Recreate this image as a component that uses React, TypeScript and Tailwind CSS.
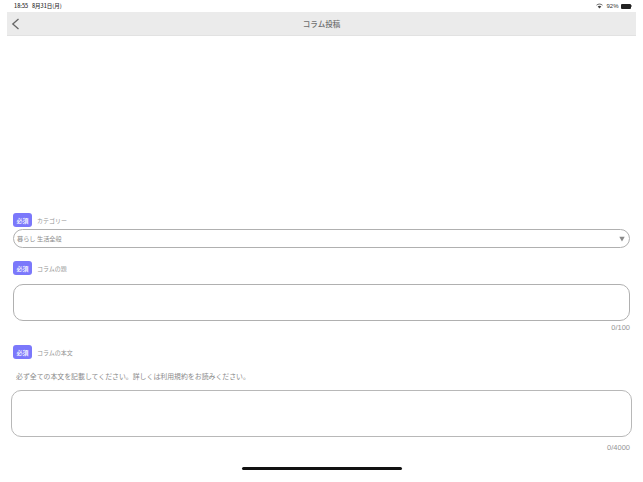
import React from 'react';

const jp = { fontFamily: '"Noto Sans CJK JP", "Liberation Sans", sans-serif' };
const latin = { fontFamily: '"Liberation Sans", sans-serif' };

function FieldLabel({ label }: { label: string }) {
  return (
    <div className="flex h-[14px] items-center pl-[13px]">
      <span className="flex h-[14px] w-[19px] items-center justify-center rounded-[3px] bg-[#7b78fb] text-[6px] font-medium text-white">
        必須
      </span>
      <span className="ml-[5px] text-[6px] text-[#949494]">{label}</span>
    </div>
  );
}

export default function App() {
  return (
    <div className="flex h-[482px] w-[643px] flex-col overflow-hidden bg-white" style={jp}>
      {/* Status bar */}
      <div className="flex h-[12px] items-center justify-between pl-[14px] pr-[11px] text-[5.5px] text-[#333333]">
        <span className="font-medium">18:55&nbsp;&nbsp;&nbsp;8月31日(月)</span>
        <div className="flex items-center gap-[2px]">
          <svg width="7" height="6" viewBox="0 0 7 6" fill="none">
            <path d="M0.5 2.2 C2.2 0.7 4.8 0.7 6.5 2.2" stroke="#444444" strokeWidth="0.8" />
            <path d="M3.5 5.4 L1.7 3.4 C2.8 2.6 4.2 2.6 5.3 3.4 Z" fill="#444444" />
          </svg>
          <span className="ml-[1px] text-[6px]" style={latin}>92%</span>
          <div className="flex items-center">
            <div className="h-[5px] w-[10px] rounded-[1px] bg-[#222222]" />
            <div className="ml-[0.5px] h-[2px] w-[1px] bg-[#999999]" />
          </div>
        </div>
      </div>

      {/* Header */}
      <div className="mx-[7px] flex h-[24px] items-center border-b border-[#e2e2e2] bg-[#ebebeb]">
        <div className="flex w-[24px] shrink-0 items-center pl-[4px]">
          <svg width="9" height="12" viewBox="0 0 9 12" fill="none">
            <path d="M7.5 1 L1.8 6 L7.5 11" stroke="#666666" strokeWidth="1.3" />
          </svg>
        </div>
        <div className="flex-1 text-center text-[7.5px] font-medium text-[#6e6e6e]">コラム投稿</div>
        <div className="w-[24px] shrink-0" />
      </div>

      {/* Form */}
      <div className="flex flex-col pt-[177px]">
        <FieldLabel label="カテゴリー" />
        <div className="mx-[13px] mt-[2px] flex h-[19px] items-center justify-between rounded-full border border-[#b0b0b0] pl-[3px] pr-[4px] text-[6.2px] text-[#8a8a8a]">
          <span>暮らし 生活全般</span>
          <svg width="6" height="6" viewBox="0 0 6 6">
            <path d="M0.3 0.8 H5.7 L3 5.4 Z" fill="#8a8a8a" />
          </svg>
        </div>

        <div className="mt-[13px]">
          <FieldLabel label="コラムの題" />
        </div>
        <div className="mx-[13px] mt-[9px] h-[37px] rounded-[10px] border border-[#b0b0b0]" />
        <div className="mr-[13px] mt-[2px] h-[10px] text-right text-[7.5px] leading-[10px] text-[#949494]" style={latin}>
          0/100
        </div>

        <div className="mt-[12px]">
          <FieldLabel label="コラムの本文" />
        </div>
        <div className="mt-[12px] h-[12px] pl-[16px] text-[6.9px] leading-[10px] text-[#8a8a8a]">
          必ず全ての本文を記載してください。詳しくは利用規約をお読みください。
        </div>
        <div className="mx-[11px] mt-[7px] h-[47px] rounded-[10px] border border-[#b8b8b8]" />
        <div className="mr-[13px] mt-[6px] h-[10px] text-right text-[7.5px] leading-[10px] text-[#949494]" style={latin}>
          0/4000
        </div>

        {/* Home indicator */}
        <div className="mx-auto mt-[14px] h-[3px] w-[160px] rounded-full bg-[#111111]" />
      </div>
    </div>
  );
}
